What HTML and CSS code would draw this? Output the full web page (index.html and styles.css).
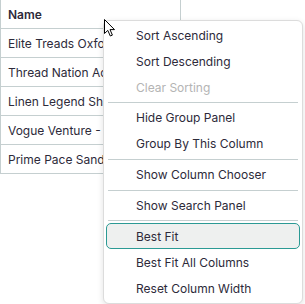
FILE: index.html
```html
<!DOCTYPE html>
<html lang="en">
<head>
    <meta charset="UTF-8">
    <meta name="viewport" content="width=device-width, initial-scale=1.0">
    <title>Grid - Column Menu</title>
    <link rel="stylesheet" href="styles.css">
</head>
<body>
    <div class="grid">
        <div class="grid-header">Name</div>
        <div class="grid-row">Elite Treads Oxford Shoes</div>
        <div class="grid-row">Thread Nation Active Tee</div>
        <div class="grid-row">Linen Legend Shirt</div>
        <div class="grid-row">Vogue Venture - Jacket</div>
        <div class="grid-row">Prime Pace Sandals</div>
    </div>

    <div class="context-menu">
        <div class="menu-item">Sort Ascending</div>
        <div class="menu-item">Sort Descending</div>
        <div class="menu-item disabled">Clear Sorting</div>
        <div class="menu-separator"></div>
        <div class="menu-item">Hide Group Panel</div>
        <div class="menu-item">Group By This Column</div>
        <div class="menu-separator"></div>
        <div class="menu-item">Show Column Chooser</div>
        <div class="menu-separator"></div>
        <div class="menu-item">Show Search Panel</div>
        <div class="menu-separator"></div>
        <div class="menu-item focused">Best Fit</div>
        <div class="menu-item">Best Fit All Columns</div>
        <div class="menu-item">Reset Column Width</div>
    </div>

    <svg class="cursor" width="13" height="20" viewBox="0 0 13 20">
        <path d="M1.5 1.5 L1.5 15.5 L4.8 12.4 L7.3 18 L9.4 17.1 L7 11.6 L11.5 11.6 Z" fill="#fff" stroke="#000" stroke-width="1" stroke-linejoin="round"/>
    </svg>
</body>
</html>
```

FILE: styles.css
```css
body {
    margin: 0;
    background-color: #ffffff;
    font-family: Inter, "Noto Sans", sans-serif;
    font-size: 12px;
    color: #2d2a3a;
}

.grid {
    width: 181px;
    box-sizing: border-box;
    border-left: 1px solid #c5cfd0;
    border-right: 1px solid #c5cfd0;
}

.grid-header {
    height: 29px;
    box-sizing: border-box;
    padding: 0 7px;
    display: flex;
    align-items: center;
    font-weight: 600;
    border-bottom: 1px solid #c5cfd0;
}

.grid-row {
    height: 29px;
    box-sizing: border-box;
    padding: 0 7px;
    display: flex;
    align-items: center;
    white-space: nowrap;
    overflow: hidden;
    border-bottom: 1px solid #c5cfd0;
}

.context-menu {
    position: absolute;
    left: 103px;
    top: 20px;
    width: 200px;
    box-sizing: border-box;
    padding: 1px 2px 2px;
    background-color: #ffffff;
    border: 1px solid #dcdcdc;
    border-radius: 6px;
    box-shadow: 0 2px 6px rgba(0, 0, 0, 0.12);
}

.menu-item {
    height: 26px;
    box-sizing: border-box;
    padding: 0 29px;
    display: flex;
    align-items: center;
    border: 1px solid transparent;
    border-radius: 5px;
    white-space: nowrap;
}

.menu-item.disabled {
    color: #b4b4b4;
}

.menu-item.focused {
    background-color: #eef0ef;
    border-color: #2b9a94;
}

.menu-separator {
    height: 1px;
    margin: 2px 2px 1.75px;
    background-color: #c5cfd0;
}

.cursor {
    position: absolute;
    left: 103px;
    top: 18px;
}
```
